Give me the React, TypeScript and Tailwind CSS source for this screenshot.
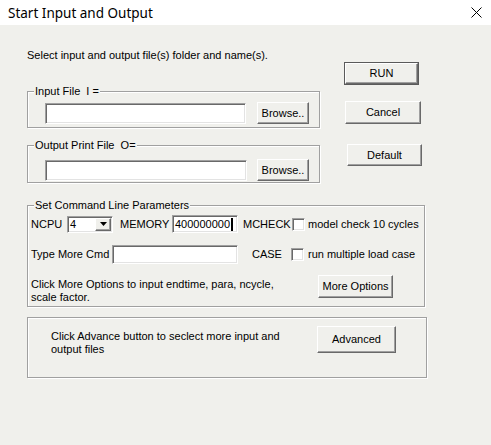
import React from "react";

const BG = "bg-[#f0f0ec]";

function Btn({ children, className = "", def = false }: { children: React.ReactNode; className?: string; def?: boolean }) {
  if (def) {
    return (
      <div className={`border border-[#5a5a5a] ${className}`}>
        <div className="w-full h-full flex items-center justify-center bg-[#f0f0ec] border-t border-l border-t-white border-l-white border-b border-r border-b-[#696969] border-r-[#696969] shadow-[inset_-1px_-1px_0_#a0a0a0]">
          {children}
        </div>
      </div>
    );
  }
  return (
    <div className={`flex items-center justify-center bg-[#f0f0ec] border-t border-l border-t-white border-l-white border-b border-r border-b-[#696969] border-r-[#696969] shadow-[inset_-1px_-1px_0_#a0a0a0] ${className}`}>
      {children}
    </div>
  );
}

function Sunken({ className = "", children }: { className?: string; children?: React.ReactNode }) {
  return (
    <div className={`bg-white border-t border-l border-t-[#a0a0a0] border-l-[#a0a0a0] border-b border-r border-b-white border-r-white shadow-[inset_1px_1px_0_#696969,inset_-1px_-1px_0_#e3e3e3] ${className}`}>
      {children}
    </div>
  );
}

function Check() {
  return <Sunken className="w-[13px] h-[13px] shrink-0" />;
}

function Caption({ children }: { children: React.ReactNode }) {
  return (
    <div className={`-mt-[7px] ml-[6px] px-[1px] w-fit h-[13px] leading-[13px] ${BG}`}>{children}</div>
  );
}

const group = "border border-[#a0a0a0] shadow-[inset_1px_1px_0_#fff,1px_1px_0_#fff]";

export default function App() {
  return (
    <div className={`w-[491px] h-[445px] ${BG} text-black text-[11px] leading-[13px] font-['Liberation_Sans',Arial,sans-serif]`}>
      {/* title bar */}
      <div className="h-[25px] bg-white flex items-center justify-between pl-[8px] pr-[9px]">
        <span className="text-[13.5px] font-['Noto_Sans',sans-serif] leading-[24px]">Start Input and Output</span>
        <svg width="11" height="11" viewBox="0 0 11 11" className="mt-[-1px]">
          <path d="M0.5 0.5 L10.5 10.5 M10.5 0.5 L0.5 10.5" stroke="#000" strokeWidth="1" fill="none" />
        </svg>
      </div>

      <div className="pl-[27px]">
        <div className="flex">
          {/* left column */}
          <div className="w-[293px]">
            <div className="mt-[24px] h-[13px]">Select input and output file(s) folder and name(s).</div>
            <div className={`mt-[29px] h-[37px] ${group}`}>
              <Caption>Input File&nbsp; I =</Caption>
              <div className="mt-[4px] flex items-center">
                <Sunken className="ml-[17px] w-[201px] h-[21px]" />
                <Btn className="ml-[11px] w-[52px] h-[22px]">Browse..</Btn>
              </div>
            </div>
            <div className={`mt-[17px] h-[38px] ${group}`}>
              <Caption>Output Print File&nbsp; O=</Caption>
              <div className="mt-[7px] flex items-center">
                <Sunken className="ml-[17px] w-[202px] h-[21px]" />
                <Btn className="ml-[10px] w-[52px] h-[22px]">Browse..</Btn>
              </div>
            </div>
          </div>
          {/* right column */}
          <div className="flex flex-col items-start">
            <Btn def className="mt-[37px] ml-[24px] w-[75px] h-[23px]">RUN</Btn>
            <Btn className="mt-[16px] ml-[25px] w-[76px] h-[23px]">Cancel</Btn>
            <Btn className="mt-[20px] ml-[27px] w-[75px] h-[22px]">Default</Btn>
          </div>
        </div>

        {/* command line params */}
        <div className={`mt-[22px] w-[398px] h-[102px] ${group}`}>
          <Caption>Set Command Line Parameters</Caption>
          <div className="mt-[3px] pl-[3px] flex items-center h-[18px]">
            <span className="w-[36px]">NCPU</span>
            <Sunken className="w-[46px] h-[17px] flex items-center justify-between pl-[2px] pr-[1px]">
              <span>4</span>
              <div className="w-[16px] h-[13px] flex items-center justify-center bg-[#f0f0ec] border-t border-l border-t-white border-l-white border-b border-r border-b-[#696969] border-r-[#696969] shadow-[inset_-1px_-1px_0_#a0a0a0]">
                <svg width="7" height="4" viewBox="0 0 7 4"><path d="M0 0 H7 L3.5 4 Z" fill="#000" /></svg>
              </div>
            </Sunken>
            <span className="ml-[7px] w-[52px]">MEMORY</span>
            <Sunken className="w-[66px] h-[18px] flex items-center pl-[2px]">
              <span>400000000</span>
              <span className="ml-[1px] w-[2px] h-[13px] bg-black" />
            </Sunken>
            <span className="ml-[5px] w-[49px]">MCHECK</span>
            <Check />
            <span className="ml-[3px]">model check 10 cycles</span>
          </div>
          <div className="mt-[12px] pl-[3px] flex items-center h-[19px]">
            <span className="w-[81px]">Type More Cmd</span>
            <Sunken className="w-[126px] h-[19px]" />
            <span className="ml-[14px] w-[39px]">CASE</span>
            <Check />
            <span className="ml-[4px]">run multiple load case</span>
          </div>
          <div className="mt-[11px] flex items-start">
            <div className="w-[290px] pl-[3px] mt-[3px]">
              Click More Options to input endtime, para, ncycle,
              <br />
              scale factor.
            </div>
            <Btn className="w-[75px] h-[23px]">More Options</Btn>
          </div>
        </div>

        {/* advanced */}
        <div className={`mt-[10px] w-[400px] h-[61px] ${group} flex items-start`}>
          <div className="w-[289px] pl-[23px] mt-[12px]">
            Click Advance button to seclect more input and
            <br />
            output files
          </div>
          <Btn className="mt-[8px] w-[79px] h-[27px]">Advanced</Btn>
        </div>
      </div>
    </div>
  );
}
